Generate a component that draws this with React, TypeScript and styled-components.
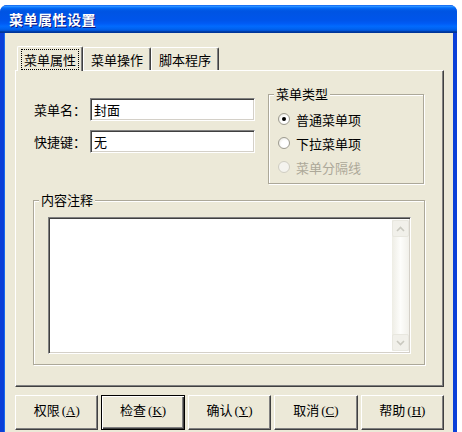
import React from 'react';
import styled, { createGlobalStyle } from 'styled-components';

const GlobalStyle = createGlobalStyle`
  html, body {
    margin: 0;
    padding: 0;
    background: #fff;
  }
  body {
    font-family: "Noto Sans CJK SC", "Liberation Sans", sans-serif;
    font-size: 13px;
    color: #000;
  }
`;

const Window = styled.div`
  margin-top: 5px;
  width: 457px;
  height: 427px;
  display: flex;
  flex-direction: column;
  overflow: hidden;
  border-radius: 7px 7px 0 0;
  background: #0a3fd8;
`;

const TitleBar = styled.div`
  height: 28px;
  flex: none;
  display: flex;
  align-items: center;
  padding-left: 9px;
  background: linear-gradient(
    to bottom,
    #0058ee 0%, #3593ff 4%, #288eff 6%, #127dff 8%, #036ffc 10%,
    #0262ee 14%, #0057e5 20%, #0054e3 24%, #0055eb 56%, #005bf5 66%,
    #026afe 76%, #0062ef 86%, #0052d6 92%, #0040ab 94%, #003092 100%
  );
`;

const Title = styled.span`
  color: #fff;
  font-weight: bold;
  font-size: 14px;
  letter-spacing: 0.5px;
  text-shadow: 1px 1px 0 #0a1883;
`;

const Body = styled.div`
  flex: 1;
  margin: 0 4px;
  padding: 12px 9px 0 11px;
  background: #ece9d8;
  display: flex;
  flex-direction: column;
  box-shadow: inset 1px 0 0 #166aee;
`;

const TabRow = styled.div`
  display: flex;
  align-items: flex-end;
  height: 25px;
  padding-left: 2px;
  position: relative;
  z-index: 1;
`;

const Tab = styled.div<{ $active?: boolean }>`
  height: ${p => (p.$active ? 25 : 23)}px;
  padding: 0 ${p => (p.$active ? 4 : 5)}px;
  margin-bottom: ${p => (p.$active ? -1 : 0)}px;
  display: flex;
  align-items: center;
  box-sizing: border-box;
  background: #ece9d8;
  border-top: 1px solid #fff;
  border-left: 1px solid #fff;
  border-right: 1px solid #404040;
  box-shadow: inset -1px 0 0 #808080;
  border-radius: 2px 2px 0 0;
`;

const TabLabel = styled.span<{ $focus?: boolean }>`
  padding: 1px 2px;
  line-height: 17px;
  outline: ${p => (p.$focus ? '1px dotted #000' : 'none')};
`;

const Panel = styled.div`
  height: 317px;
  box-sizing: border-box;
  border-top: 1px solid #fff;
  border-left: 1px solid #fff;
  border-right: 1px solid #404040;
  border-bottom: 1px solid #404040;
  box-shadow: inset -1px -1px 0 #808080;
  display: flex;
  flex-direction: column;
`;

const TopRow = styled.div`
  display: flex;
  padding-left: 17px;
`;

const Fields = styled.div`
  display: grid;
  grid-template-columns: 57px 165px;
  grid-auto-rows: 23px;
  row-gap: 9px;
  margin-top: 27px;
  align-items: center;
`;

const Label = styled.span`
  white-space: nowrap;
  padding-left: 1px;
`;

const Sunken = styled.div`
  box-sizing: border-box;
  background: #fff;
  border-top: 1px solid #808080;
  border-left: 1px solid #808080;
  border-right: 1px solid #fff;
  border-bottom: 1px solid #fff;
  box-shadow: inset 1px 1px 0 #404040, inset -1px -1px 0 #d4d0c8;
`;

const Input = styled(Sunken)`
  height: 23px;
  padding: 0 3px;
  display: flex;
  align-items: center;
  line-height: 16px;
`;

const Group = styled.fieldset<{ $width: number; $top: number; $left: number }>`
  margin: ${p => p.$top}px 0 0 ${p => p.$left}px;
  width: ${p => p.$width}px;
  box-sizing: border-box;
  min-width: 0;
  border: 1px solid #aca899;
  box-shadow: 1px 1px 0 #fff, inset 1px 1px 0 #fff;
`;

const Legend = styled.legend`
  padding: 0 2px;
  margin-left: 5px;
  line-height: 16px;
  background: #ece9d8;
`;

const TypeGroup = styled(Group)`
  padding: 5px 0 4px 0;
  display: flex;
  flex-direction: column;
`;

const RadioRow = styled.div<{ $disabled?: boolean }>`
  height: 24px;
  padding-left: 9px;
  display: flex;
  align-items: center;
  gap: 6px;
  color: ${p => (p.$disabled ? '#aca899' : '#000')};
`;

const RadioDot = styled.span<{ $checked?: boolean; $disabled?: boolean }>`
  width: 12px;
  height: 12px;
  box-sizing: border-box;
  border-radius: 50%;
  border: 1px solid ${p => (p.$disabled ? '#cfcdc2' : '#9d9b90')};
  background: ${p =>
    p.$disabled
      ? '#f4f3ee'
      : 'radial-gradient(circle at 60% 60%, #fff 40%, #e2e0d6 100%)'};
  display: flex;
  align-items: center;
  justify-content: center;
  &::after {
    content: '';
    width: 4px;
    height: 4px;
    border-radius: 50%;
    background: #000;
    display: ${p => (p.$checked ? 'block' : 'none')};
  }
`;

const NotesGroup = styled(Group)`
  padding: 9px 0 10px 0;
`;

const Memo = styled(Sunken)`
  height: 137px;
  margin: 0 13px 0 14px;
  display: flex;
  justify-content: flex-end;
  padding: 2px 1px 2px 2px;
`;

const ScrollBar = styled.div`
  width: 17px;
  display: flex;
  flex-direction: column;
  justify-content: space-between;
  background: linear-gradient(to right, #eeede5, #fdfdfb 50%, #f1f0ea);
`;

const ScrollButton = styled.div`
  width: 17px;
  height: 17px;
  box-sizing: border-box;
  border: 1px solid #e8e7df;
  border-radius: 2px;
  background: #f1f0ea;
  display: flex;
  align-items: center;
  justify-content: center;
`;

const ButtonRow = styled.div`
  display: flex;
  gap: 3px;
  margin-top: 8px;
`;

const Button = styled.div<{ $default?: boolean }>`
  flex: 1;
  height: 35px;
  box-sizing: border-box;
  padding-top: 4px;
  text-align: center;
  line-height: 20px;
  background: #ece9d8;
  border: 1px solid ${p => (p.$default ? '#000' : 'transparent')};
  border-top-color: ${p => (p.$default ? '#000' : '#fff')};
  border-left-color: ${p => (p.$default ? '#000' : '#fff')};
  border-right-color: ${p => (p.$default ? '#000' : '#404040')};
  border-bottom-color: ${p => (p.$default ? '#000' : '#404040')};
  box-shadow: ${p =>
    p.$default
      ? 'inset 1px 1px 0 #fff, inset -1px -1px 0 #404040, inset -2px -2px 0 #808080'
      : 'inset -1px -1px 0 #808080'};
`;

const Key = styled.span`
  margin-left: 2px;
  font-family: "Liberation Serif", "Noto Sans CJK SC", serif;
  font-size: 13px;
`;

const Chevron = ({ down }: { down?: boolean }) => (
  <svg width="9" height="6" viewBox="0 0 9 6">
    <path
      d={down ? 'M1 1 L4.5 4.5 L8 1' : 'M1 5 L4.5 1.5 L8 5'}
      fill="none"
      stroke="#c9c8bf"
      strokeWidth="1.6"
    />
  </svg>
);

const buttons = [
  { text: '权限', key: 'A' },
  { text: '检查', key: 'K', def: true },
  { text: '确认', key: 'Y' },
  { text: '取消', key: 'C' },
  { text: '帮助', key: 'H' },
];

export default function App() {
  return (
    <>
      <GlobalStyle />
      <Window>
        <TitleBar>
          <Title>菜单属性设置</Title>
        </TitleBar>
        <Body>
          <TabRow>
            <Tab $active>
              <TabLabel $focus>菜单属性</TabLabel>
            </Tab>
            <Tab>
              <TabLabel>菜单操作</TabLabel>
            </Tab>
            <Tab>
              <TabLabel>脚本程序</TabLabel>
            </Tab>
          </TabRow>
          <Panel>
            <TopRow>
              <Fields>
                <Label>菜单名：</Label>
                <Input>封面</Input>
                <Label>快捷键：</Label>
                <Input>无</Input>
              </Fields>
              <TypeGroup $width={156} $top={15} $left={13}>
                <Legend>菜单类型</Legend>
                <RadioRow>
                  <RadioDot $checked />
                  普通菜单项
                </RadioRow>
                <RadioRow>
                  <RadioDot />
                  下拉菜单项
                </RadioRow>
                <RadioRow $disabled>
                  <RadioDot $disabled />
                  菜单分隔线
                </RadioRow>
              </TypeGroup>
            </TopRow>
            <NotesGroup $width={392} $top={8} $left={17}>
              <Legend>内容注释</Legend>
              <Memo>
                <ScrollBar>
                  <ScrollButton>
                    <Chevron />
                  </ScrollButton>
                  <ScrollButton>
                    <Chevron down />
                  </ScrollButton>
                </ScrollBar>
              </Memo>
            </NotesGroup>
          </Panel>
          <ButtonRow>
            {buttons.map(b => (
              <Button key={b.key} $default={b.def}>
                {b.text}
                <Key>
                  (<u>{b.key}</u>)
                </Key>
              </Button>
            ))}
          </ButtonRow>
        </Body>
      </Window>
    </>
  );
}
